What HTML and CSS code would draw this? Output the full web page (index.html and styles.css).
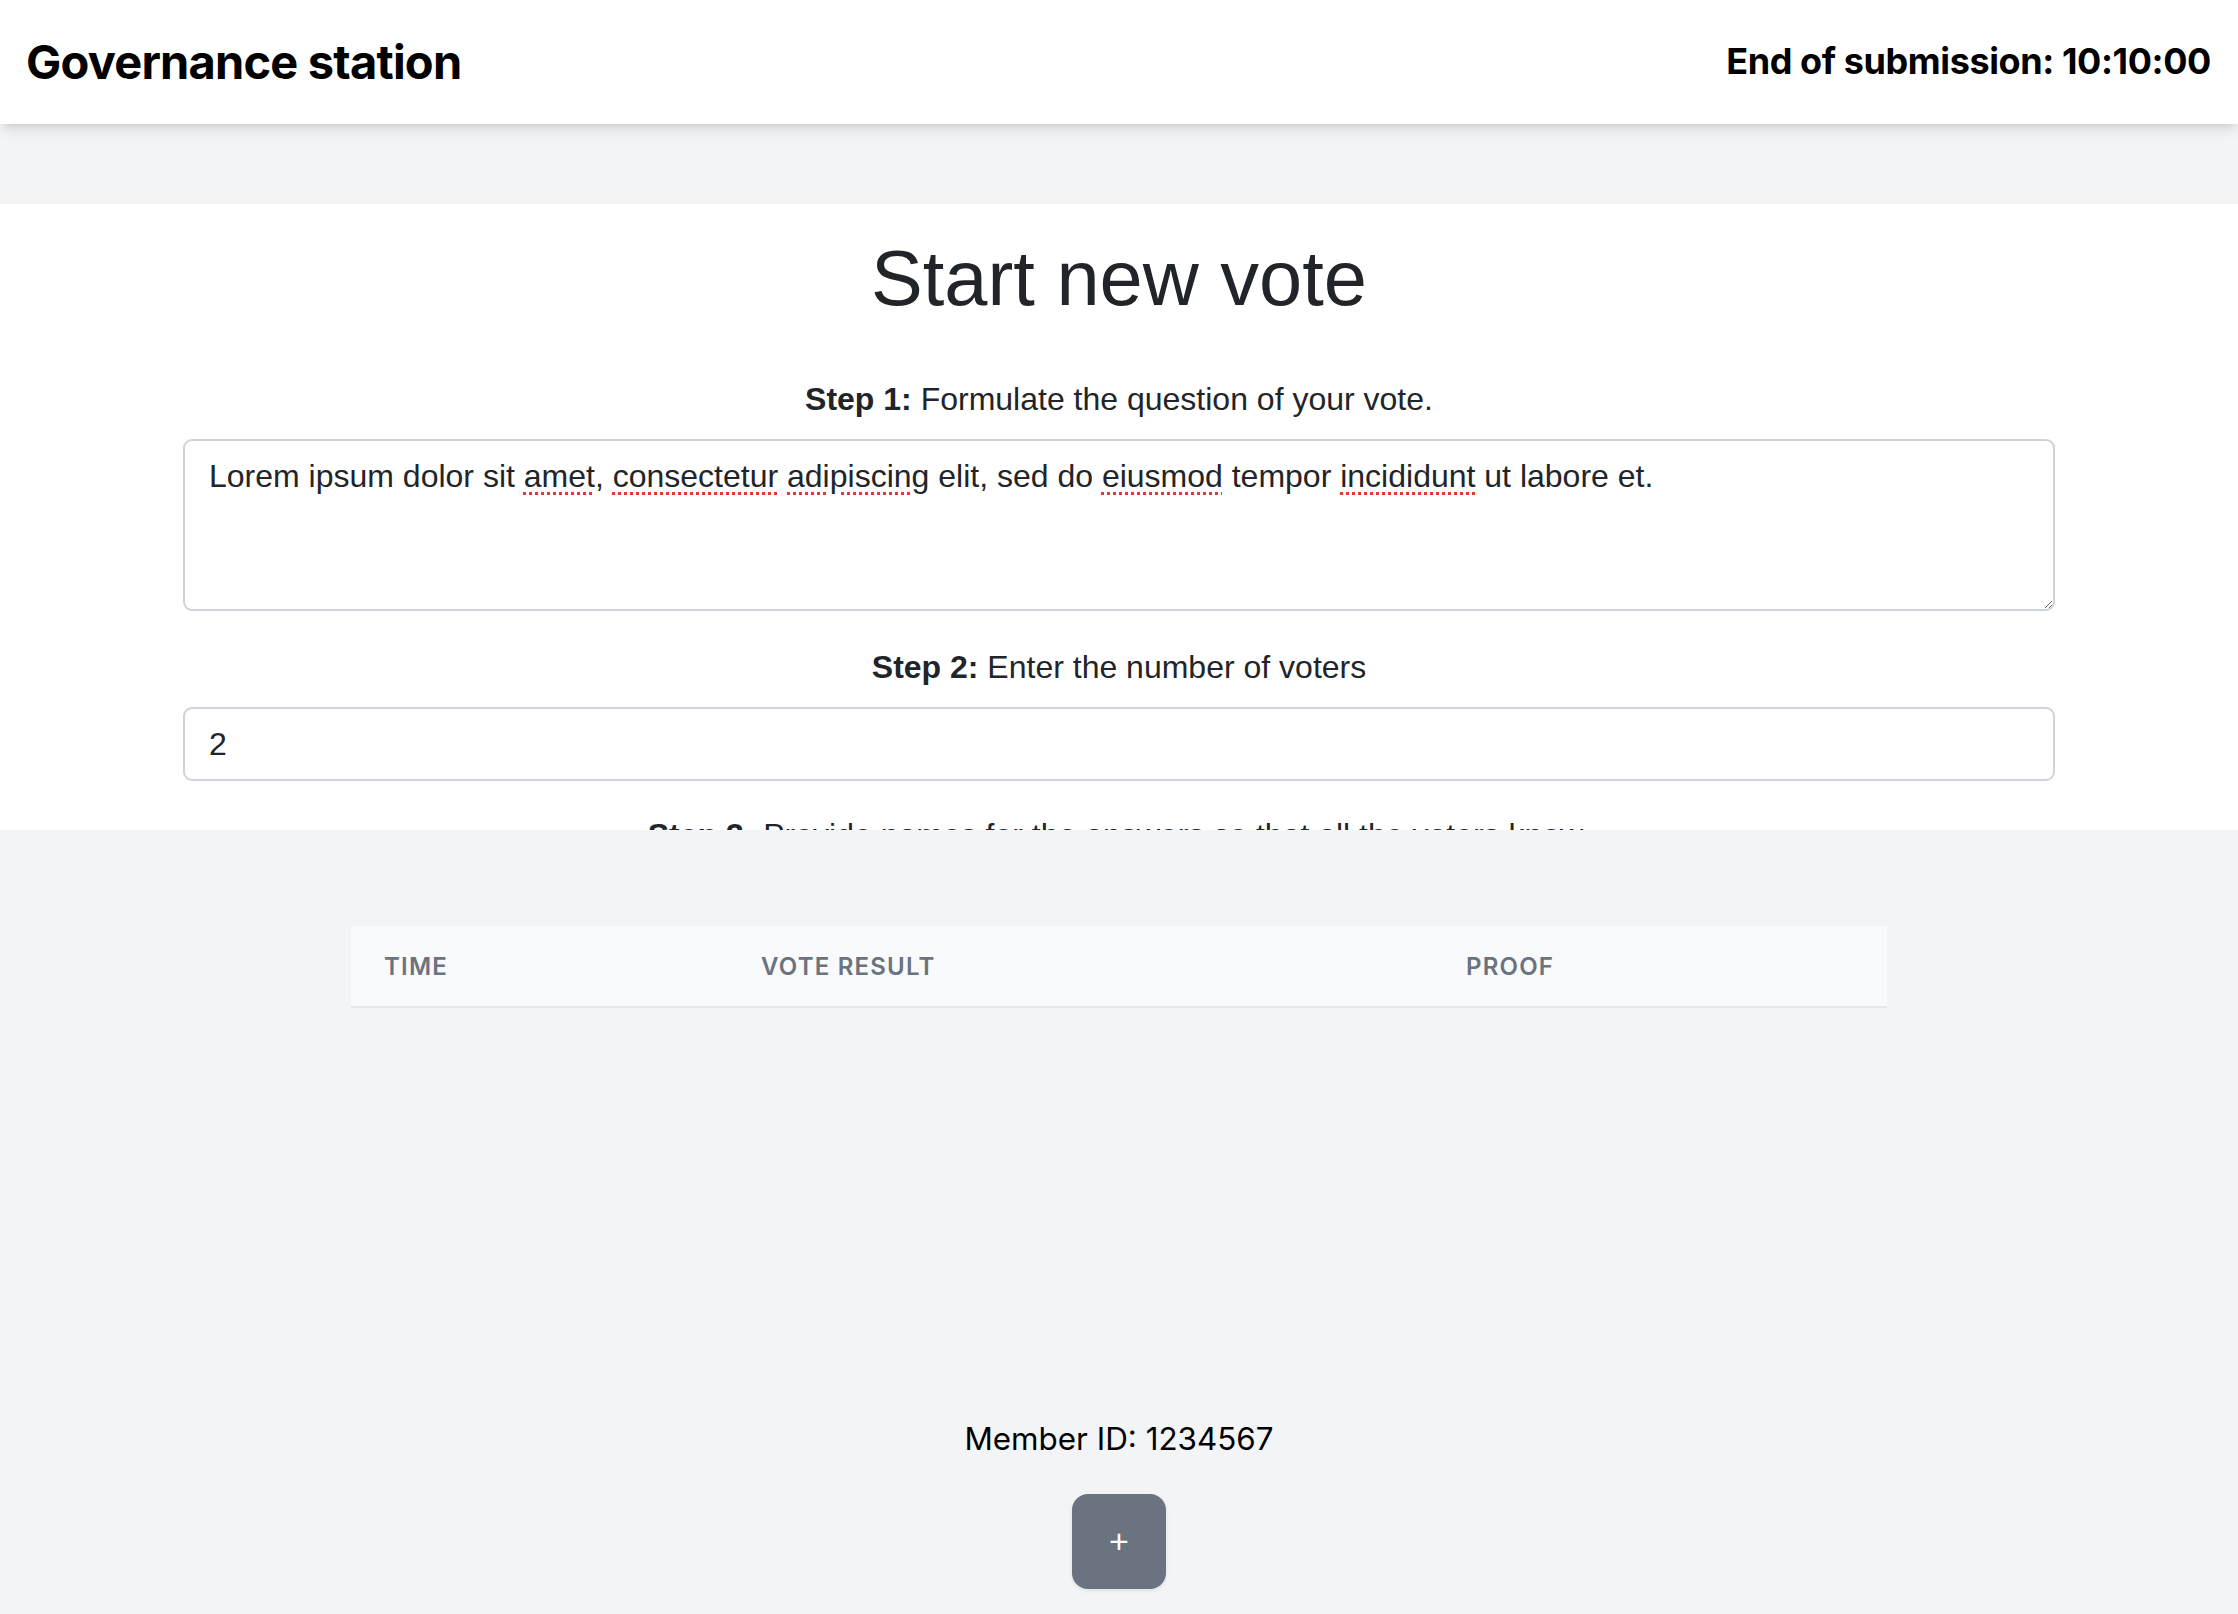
FILE: index.html
```html
<!DOCTYPE html>
<html lang="en">
<head>
<meta charset="utf-8">
<title>Governance station</title>
<link rel="stylesheet" href="styles.css">
</head>
<body>
<header class="topbar">
  <div class="brand">Governance station</div>
  <div class="deadline">End of submission: 10:10:00</div>
</header>

<main class="page">
  <section class="panel">
    <div class="container">
      <h1 class="panel-title">Start new vote</h1>

      <p class="step"><strong>Step 1:</strong> Formulate the question of your vote.</p>
      <div class="field field-area" role="textbox" aria-multiline="true">Lorem ipsum dolor sit <span class="spell">amet</span>, <span class="spell">consectetur</span> <span class="spell">adipiscing</span> elit, sed do <span class="spell">eiusmod</span> tempor <span class="spell">incididunt</span> ut labore et.</div>

      <p class="step step-gap"><strong>Step 2:</strong> Enter the number of voters</p>
      <div class="field field-input" role="textbox">2</div>

      <p class="step step-gap3"><strong>Step 3:</strong> Provide names for the answers so that all the voters know.</p>
    </div>
  </section>

  <section class="results">
    <div class="table-card">
      <div class="thead">
        <div class="th">Time</div>
        <div class="th">Vote result</div>
        <div class="th">Proof</div>
      </div>
    </div>
  </section>

  <footer class="member">
    <div class="member-id">Member ID: 1234567</div>
    <button class="add-btn" type="button">+</button>
  </footer>
</main>
</body>
</html>
```

FILE: styles.css
```css
* { box-sizing: border-box; }

html, body {
  margin: 0;
  padding: 0;
}

body {
  background: #f3f4f6;
  font-family: Inter, "Noto Sans", "Liberation Sans", sans-serif;
  color: #000;
  min-height: 1614px;
}

.topbar {
  position: relative;
  z-index: 2;
  height: 124px;
  background: #fff;
  display: flex;
  align-items: center;
  justify-content: space-between;
  padding: 0 27px 2px 26px;
  box-shadow: 0 8px 12px -2px rgba(0,0,0,0.10), 0 4px 8px -4px rgba(0,0,0,0.10);
}

.brand {
  font-weight: 700;
  font-size: 47px;
  letter-spacing: -0.8px;
  line-height: 1;
}

.deadline {
  font-weight: 700;
  font-size: 36px;
  letter-spacing: -0.4px;
  line-height: 1;
}

.page {
  padding-top: 80px;
}

.panel {
  background: #fff;
  height: 626px;
  overflow: hidden;
}

.container {
  width: 1872px;
  margin: 0 auto;
  font-family: "Liberation Sans", Arial, Helvetica, sans-serif;
  color: #212529;
}

.panel-title {
  margin: 0 0 50px;
  padding-top: 28px;
  font-size: 77.6px;
  line-height: 93px;
  font-weight: 400;
  text-align: center;
  color: #212529;
}

.step {
  margin: 0 0 16px;
  font-size: 32px;
  line-height: 48px;
  text-align: center;
}

.step strong { font-weight: 700; }

.step-gap { margin-top: 32px; margin-bottom: 16px; }
.step-gap3 { margin-top: 30px; }

.field {
  width: 100%;
  border: 2px solid #ced4da;
  border-radius: 9px;
  background: #fff;
  font-size: 32px;
  line-height: 48px;
  padding: 11px 24px 12px;
  color: #212529;
}

.field-area {
  height: 172px;
  overflow: auto;
  resize: vertical;
}

.field-input {
  height: 74px;
  padding-top: 11px;
}

.spell {
  text-decoration: underline dotted #e5392f;
  text-decoration-thickness: 3px;
  text-underline-offset: 5px;
}

.results {
  padding-top: 96px;
}

.table-card {
  width: 1536px;
  margin: 0 auto;
  background: #f9fafb;
  border-bottom: 2px solid #e5e7eb;
}

.thead {
  display: grid;
  grid-template-columns: 377px 705px 454px;
  height: 80px;
  align-items: center;
}

.th {
  padding-left: 33px;
  font-family: Inter, "Noto Sans", sans-serif;
  font-size: 24px;
  font-weight: 600;
  letter-spacing: 1.2px;
  text-transform: uppercase;
  color: #6b7280;
  line-height: 32px;
  padding-top: 2px;
}

.member {
  display: flex;
  flex-direction: column;
  align-items: center;
  padding-top: 407px;
}

.member-id {
  font-size: 31.4px;
  line-height: 48px;
  color: #000;
}

.add-btn {
  margin-top: 31px;
  width: 94px;
  height: 95px;
  border: none;
  border-radius: 16px;
  background: #6b7280;
  color: #fff;
  font-family: "Liberation Sans", Arial, sans-serif;
  font-size: 34px;
  font-weight: 400;
  line-height: 1;
  padding: 0 0 2px;
  box-shadow: 0 2px 4px rgba(0,0,0,0.08);
}
```
